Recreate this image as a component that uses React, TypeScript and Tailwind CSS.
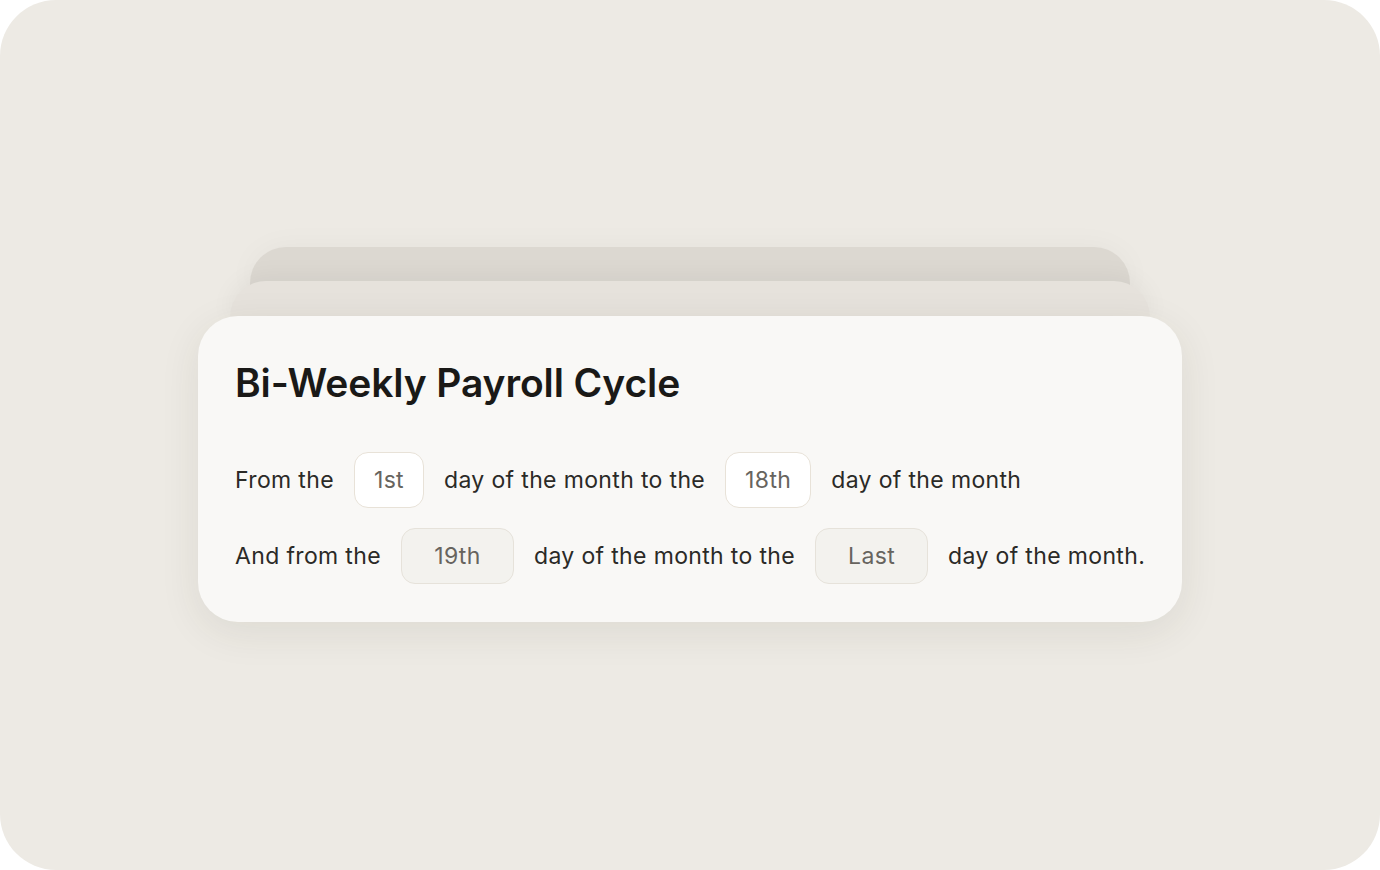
import React from "react";

function Pill({ value, muted }: { value: string; muted?: boolean }) {
  return (
    <span
      className={
        muted
          ? "flex h-[56px] w-[113px] shrink-0 items-center justify-center rounded-[14px] border border-[#e6e2da] bg-[#f3f2ee] text-[#67645e]"
          : "flex h-[56px] shrink-0 items-center justify-center rounded-[14px] border border-[#e8e2d8] bg-white px-[19px] text-[#67645e]"
      }
    >
      {value}
    </span>
  );
}

export default function App() {
  return (
    <div className="h-[870px] w-[1380px] bg-white" style={{ fontFamily: "Inter, 'Noto Sans', sans-serif" }}>
      <div className="flex h-full w-full flex-col items-center rounded-[56px] bg-[#edeae4] pt-[247px]">
        <div className="h-[40px] w-[880px] rounded-t-[36px] bg-[#dcd8d1] shadow-[0_0_30px_rgba(0,0,0,0.04)]" />
        <div className="-mt-[6px] h-[40px] w-[920px] rounded-t-[36px] bg-[#e6e2dc] shadow-[0_-4px_24px_rgba(0,0,0,0.05)]" />
        <div className="-mt-[5px] flex w-[984px] flex-col rounded-[40px] bg-[#f9f8f6] pb-[38px] pl-[37px] pr-[20px] pt-[42px] shadow-[0_10px_40px_rgba(60,50,30,0.09)]">
          <h1 className="text-[39px] font-semibold leading-[50px] tracking-[-0.1px] text-[#1a1917]">
            Bi-Weekly Payroll Cycle
          </h1>
          <div className="mt-[44px] flex flex-col gap-[20px] whitespace-nowrap text-[23px] tracking-[0.35px] text-[#2b2a27]">
            <div className="flex items-center gap-[20px]">
              <span>From the</span>
              <Pill value="1st" />
              <span>day of the month to the</span>
              <Pill value="18th" />
              <span>day of the month</span>
            </div>
            <div className="flex items-center gap-[20px]">
              <span>And from the</span>
              <Pill value="19th" muted />
              <span>day of the month to the</span>
              <Pill value="Last" muted />
              <span>day of the month.</span>
            </div>
          </div>
        </div>
      </div>
    </div>
  );
}
